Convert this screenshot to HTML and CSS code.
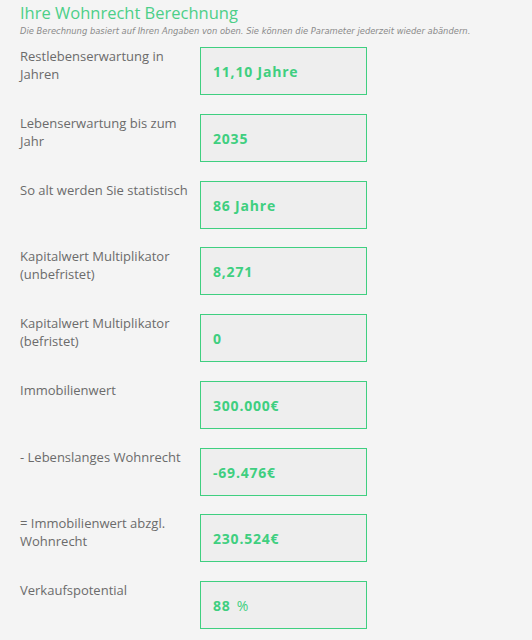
FILE: index.html
```html
<!DOCTYPE html>
<html lang="de">
<head>
    <meta charset="UTF-8">
    <meta name="viewport" content="width=device-width, initial-scale=1.0">
    <title>Wohnrecht Berechnung</title>
    <link rel="stylesheet" href="styles.css">
</head>
<body>

    <div class="result">
        <h2>Ihre Wohnrecht Berechnung</h2>
        <p class="hint">Die Berechnung basiert auf Ihren Angaben von oben. Sie können die Parameter jederzeit wieder abändern.</p>

        <div class="rows">
            <div class="label">Restlebenserwartung in Jahren</div>
            <div class="value">11,10 Jahre</div>

            <div class="label">Lebenserwartung bis zum Jahr</div>
            <div class="value">2035</div>

            <div class="label">So alt werden Sie statistisch</div>
            <div class="value">86 Jahre</div>

            <div class="label">Kapitalwert Multiplikator (unbefristet)</div>
            <div class="value">8,271</div>

            <div class="label">Kapitalwert Multiplikator (befristet)</div>
            <div class="value">0</div>

            <div class="label">Immobilienwert</div>
            <div class="value">300.000€</div>

            <div class="label">- Lebenslanges Wohnrecht</div>
            <div class="value">-69.476€</div>

            <div class="label">= Immobilienwert abzgl. Wohnrecht</div>
            <div class="value">230.524€</div>

            <div class="label">Verkaufspotential</div>
            <div class="value">88 <span class="unit">%</span></div>
        </div>
    </div>

</body>
</html>
```

FILE: styles.css
```css
* {
    margin: 0;
    padding: 0;
    box-sizing: border-box;
}

body {
    background: #f4f4f4;
    font-family: 'Open Sans', sans-serif;
    color: #6b6b6b;
}

.result {
    padding: 2px 20px 20px 20px;
}

h2 {
    font-size: 16.5px;
    font-weight: 400;
    color: #4ccf88;
    line-height: 22px;
}

.hint {
    font-family: 'DejaVu Sans', sans-serif;
    font-size: 8.4px;
    line-height: 11px;
    font-style: italic;
    color: #8a8a8a;
    margin-top: 2px;
    margin-bottom: 10px;
}

.rows {
    display: grid;
    grid-template-columns: 180px 167px;
    row-gap: 18.75px;
}

.label {
    font-size: 13px;
    line-height: 18px;
    padding-right: 4px;
}

.value {
    height: 48px;
    border: 1.5px solid #3fcf80;
    background: #eeeeee;
    display: flex;
    align-items: center;
    padding: 1px 12px 0 12px;
    font-size: 14px;
    font-weight: 700;
    letter-spacing: 0.8px;
    color: #3fcf80;
}

.unit {
    font-weight: 400;
    margin-left: 6px;
}
```
